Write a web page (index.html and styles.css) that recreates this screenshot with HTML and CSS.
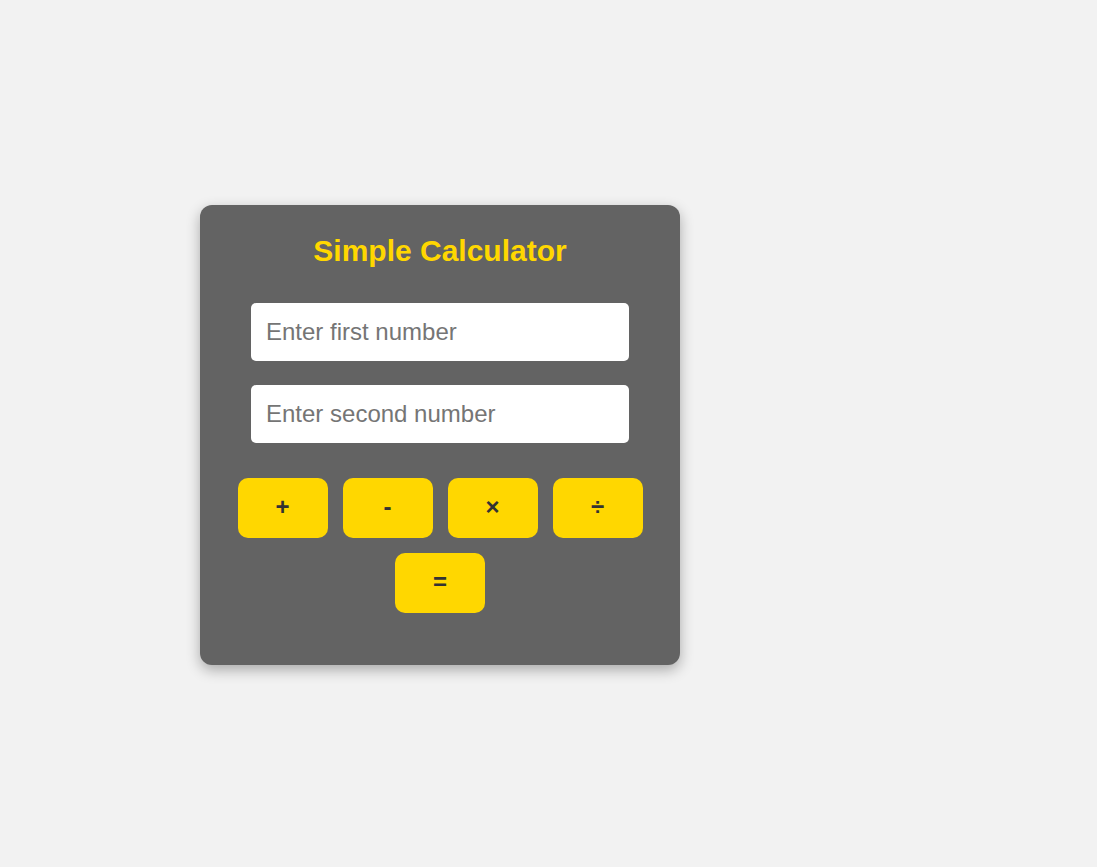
FILE: index.html
```html
<!DOCTYPE html>
<html lang="en">
<head>
<meta charset="utf-8">
<title>Simple Calculator</title>
<link rel="stylesheet" href="styles.css">
</head>
<body>
<div class="page">
  <div class="calculator">
    <h2 class="title">Simple Calculator</h2>
    <input class="field" type="number" placeholder="Enter first number">
    <input class="field" type="number" placeholder="Enter second number">
    <div class="buttons">
      <button class="btn">+</button>
      <button class="btn">-</button>
      <button class="btn">×</button>
      <button class="btn">÷</button>
      <button class="btn">=</button>
    </div>
  </div>
</div>
</body>
</html>
```

FILE: styles.css
```css
html, body {
  margin: 0;
  padding: 0;
  background: #f2f2f2;
  font-family: "Liberation Sans", Arial, sans-serif;
}

.page {
  padding: 205px 0 40px 200px;
}

.calculator {
  width: 480px;
  box-sizing: border-box;
  padding: 29px 30px 52px;
  background: #636363;
  border-radius: 12px;
  box-shadow: 0 5px 14px rgba(0, 0, 0, 0.3);
  display: flex;
  flex-direction: column;
  align-items: center;
  gap: 24px;
}

.title {
  margin: 0 0 11px;
  font-size: 30px;
  line-height: 34px;
  font-weight: bold;
  color: #ffd700;
  text-align: center;
}

.field {
  width: 378px;
  height: 58px;
  box-sizing: border-box;
  padding: 0 15px;
  border: none;
  border-radius: 5px;
  background: #ffffff;
  font-family: "Liberation Sans", Arial, sans-serif;
  font-size: 24px;
  color: #333;
  outline: none;
}

.field::placeholder {
  color: #757575;
}

.buttons {
  margin-top: 11px;
  width: 420px;
  display: flex;
  flex-wrap: wrap;
  justify-content: center;
  gap: 15px;
}

.btn {
  width: 90px;
  height: 60px;
  padding: 0 0 3px;
  border: none;
  border-radius: 10px;
  background: #ffd700;
  color: #333333;
  font-family: "Liberation Sans", Arial, sans-serif;
  font-size: 24px;
  font-weight: bold;
  cursor: pointer;
}
```
